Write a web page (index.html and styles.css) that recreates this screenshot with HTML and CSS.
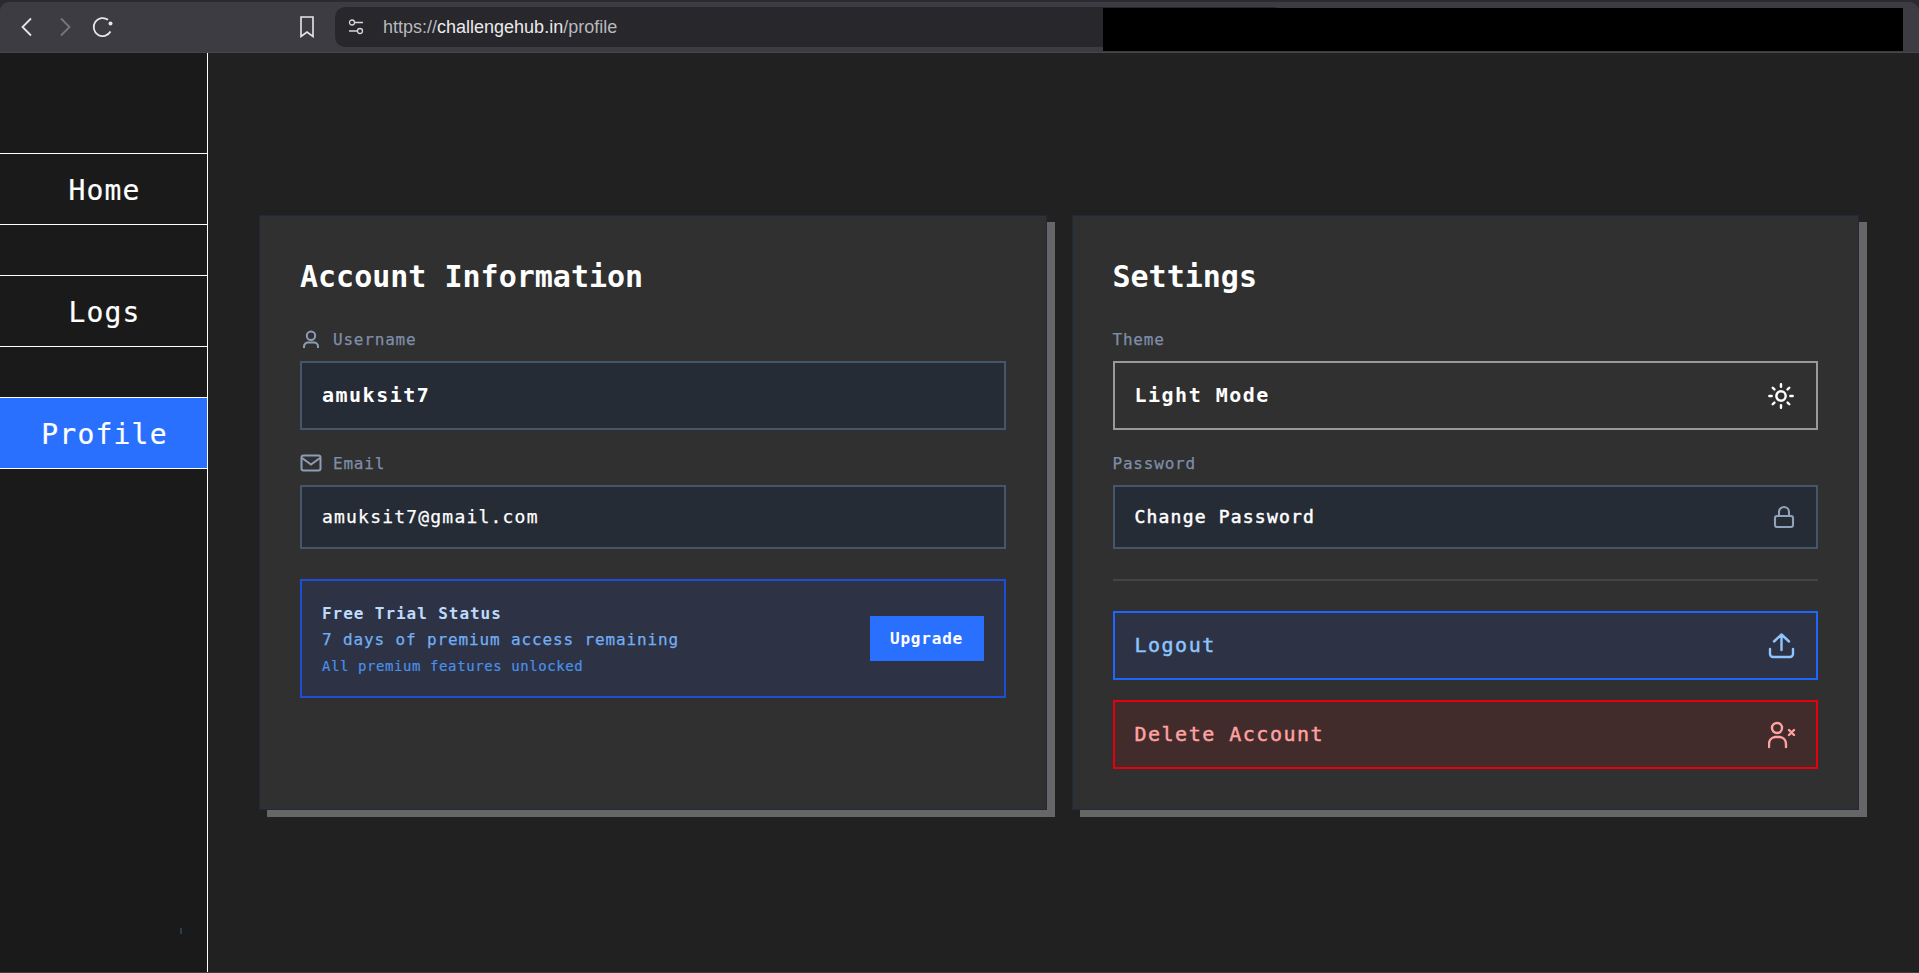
FILE: index.html
```html
<!DOCTYPE html>
<html lang="en">
<head>
<meta charset="utf-8">
<title>Profile</title>
<link rel="stylesheet" href="styles.css">
</head>
<body>
<header class="browser">
  <div class="browser-nav">
    <svg class="b-icon back" width="14" height="20" viewBox="0 0 14 20"><path d="M11 1.5 2.5 10 11 18.5"/></svg>
    <svg class="b-icon forward" width="14" height="20" viewBox="0 0 14 20"><path d="M3 1.5 11.500 10 3 18.500"/></svg>
    <svg class="b-icon reload" width="22" height="22" viewBox="0 0 22 22"><path d="M16 3.800A9 9 0 1 0 18.500 15.500"/><circle class="dot" cx="18.500" cy="7.500" r="2"/></svg>
  </div>
  <svg class="b-icon bookmark" width="16" height="22" viewBox="0 0 16 22"><path d="M2 1h12v19.500L8 16l-6 4.500z"/></svg>
  <div class="omnibox">
    <svg class="tune" width="16" height="16" viewBox="0 0 16 16"><circle cx="4" cy="3.500" r="2.500"/><path d="M6.500 3.500H15M1 12h8.500"/><circle cx="12" cy="12" r="2.500"/></svg>
    <span class="url">https://<b>challengehub.in</b>/profile</span>
  </div>
  <div class="redacted"></div>
</header>
<div class="app">
  <aside class="sidebar">
    <nav class="nav">
      <a class="nav-item">Home</a>
      <a class="nav-item">Logs</a>
      <a class="nav-item active">Profile</a>
    </nav>
    <span class="speck"></span>
  </aside>
  <main class="main">
    <section class="card">
      <h2 class="card-title">Account Information</h2>
      <div class="label">
        <svg class="label-icon" width="22" height="22" viewBox="0 0 22 22"><circle cx="11" cy="7.700" r="4.200"/><path d="M4 20v-1.500a4 4 0 0 1 4-4h6a4 4 0 0 1 4 4V20"/></svg>
        <span>Username</span>
      </div>
      <div class="field tall slate"><span class="text-lg strong">amuksit7</span></div>
      <div class="label next">
        <svg class="label-icon" width="22" height="22" viewBox="0 0 22 22"><rect x="1.500" y="3.500" width="19" height="15" rx="2"/><path d="m2 6 9 6.500L20 6"/></svg>
        <span>Email</span>
      </div>
      <div class="field short slate"><span class="text-md">amuksit7@gmail.com</span></div>
      <div class="trial">
        <div class="trial-copy">
          <div class="trial-title">Free Trial Status</div>
          <div class="trial-days">7 days of premium access remaining</div>
          <div class="trial-note">All premium features unlocked</div>
        </div>
        <button class="upgrade">Upgrade</button>
      </div>
    </section>
    <section class="card">
      <h2 class="card-title">Settings</h2>
      <div class="label"><span>Theme</span></div>
      <div class="field tall theme">
        <span class="text-lg strong">Light Mode</span>
        <svg class="f-icon white" width="28" height="28" viewBox="0 0 24 24"><circle cx="12" cy="12" r="4"/><path d="M12 2v2M12 20v2M4.930 4.930l1.410 1.410M17.660 17.660l1.410 1.410M2 12h2M20 12h2M6.340 17.660l-1.410 1.410M19.070 4.930l-1.410 1.410"/></svg>
      </div>
      <div class="label next"><span>Password</span></div>
      <div class="field short slate">
        <span class="text-md semi">Change Password</span>
        <svg class="f-icon muted" width="24" height="24" viewBox="0 0 24 24"><rect x="3" y="11" width="18" height="11" rx="2"/><path d="M7 11V7a5 5 0 0 1 10 0v4"/></svg>
      </div>
      <hr class="divider">
      <div class="field tall logout">
        <span class="text-lg medium">Logout</span>
        <svg class="f-icon" width="28" height="28" viewBox="0 0 28 28"><path d="M2 17v5a3 3 0 0 0 3 3h17a3 3 0 0 0 3-3v-5M13.500 18V3M6 9.500l7.500-7 7.500 7"/></svg>
      </div>
      <div class="field tall danger">
        <span class="text-lg medium">Delete Account</span>
        <svg class="f-icon" width="28" height="28" viewBox="0 0 28 28"><circle cx="9" cy="7" r="5"/><path d="M1 26v-3a7 7 0 0 1 6-7h5a7 7 0 0 1 6 7v3M21 9l5 5M26 9l-5 5"/></svg>
      </div>
    </section>
  </main>
</div>
</body>
</html>
```
FILE: styles.css
```css
* { box-sizing: border-box; }
html, body { margin: 0; height: 100%; }
body {
  height: 973px;
  display: flex;
  flex-direction: column;
  overflow: hidden;
  background: #2a2a30;
  font-family: "DejaVu Sans Mono", "Liberation Mono", monospace;
  color: #fff;
}
.browser {
  height: 51px;
  margin-top: 2px;
  flex: none;
  display: flex;
  align-items: center;
  background: #3c3c42;
  border-radius: 9px 9px 0 0;
  position: relative;
  border-bottom: 1px solid #45454b;
}
.browser-nav { display: flex; align-items: center; width: 295px; padding-left: 20px; }
.b-icon { fill: none; stroke: #e6e6e8; stroke-width: 1.800; }
.back { margin-right: 24px; }
.forward { stroke: #77777c; margin-right: 20px; }
.reload .dot { fill: #e6e6e8; stroke: none; }
.bookmark { margin-left: 4px; stroke-width: 1.600; }
.omnibox {
  margin-left: 20px;
  width: 949px;
  height: 40px;
  display: flex;
  align-items: center;
  padding-left: 13px;
  background: #27272c;
  border-radius: 10px;
}
.tune { fill: none; stroke: #d8d8da; stroke-width: 1.300; }
.url {
  margin-left: 19px;
  font: 18px "Liberation Sans", Arial, sans-serif;
  color: #b9b9bd;
}
.url b { font-weight: 400; color: #eaeaec; }
.redacted { position: absolute; left: 1103px; right: 16px; top: 6px; bottom: 1px; background: #000; }

.app { flex: 1; display: flex; min-height: 0; border-bottom: 1px solid #3c3c42; }
.sidebar {
  width: 208px;
  flex: none;
  background: #1a1a1a;
  border-right: 1px solid #fff;
  padding-top: 100px;
  position: relative;
}
.nav { display: flex; flex-direction: column; gap: 50px; }
.nav-item {
  height: 72px;
  padding: 2px 0 0 2px;
  display: flex;
  align-items: center;
  justify-content: center;
  border-top: 1px solid #fff;
  border-bottom: 1px solid #fff;
  font-size: 28px;
  letter-spacing: 1.200px;
  -webkit-text-stroke: .2px #fff;
}
.nav-item.active { background: #2970ff; }
.speck { position: absolute; left: 180px; top: 875px; width: 2px; height: 6px; background: #2c3c50; }

.main {
  flex: 1;
  min-width: 0;
  display: flex;
  gap: 25px;
  align-items: flex-start;
  padding: 162px 60px 0 51px;
  background: #212121;
}
.card {
  flex: 1 1 0;
  height: 595px;
  padding: 40px;
  background: #303030;
  border: 1px solid #1e293b;
  box-shadow: 8px 7px 0 #666;
}
.card-title { margin: 0 0 33px; padding-top: 3px; font-size: 30px; line-height: 36px; font-weight: 700; }
.label {
  height: 22px;
  margin-bottom: 11px;
  display: flex;
  align-items: center;
  gap: 11px;
  font-size: 16px;
  letter-spacing: .05em;
  color: #7f8ea8;
  -webkit-text-stroke: .25px #7f8ea8;
}
.label.next { margin-top: 22px; }
.label-icon { fill: none; stroke: #8e9db5; stroke-width: 2; flex: none; }
.field {
  display: flex;
  align-items: center;
  justify-content: space-between;
  padding: 0 20px;
  border: 2px solid;
}
.tall { height: 69px; }
.short { height: 64px; }
.slate { background: #262c36; border-color: #45556c; }
.theme { border-color: #999; }
.text-lg { font-size: 20px; letter-spacing: 1.500px; padding-bottom: 2px; }
.text-md { font-size: 18px; letter-spacing: 1.200px; padding-bottom: 1px; -webkit-text-stroke: .25px currentColor; }
.strong { font-weight: 700; }
.semi { -webkit-text-stroke: .5px currentColor; }
.medium { -webkit-text-stroke: .45px currentColor; }
.f-icon { fill: none; stroke: currentColor; stroke-width: 2.400; flex: none; stroke-linecap: round; stroke-linejoin: round; }
.f-icon.white { color: #fff; stroke-width: 2.100; margin-right: 1px; }
.f-icon.muted { color: #90a1b9; stroke-width: 2.100; }
.trial {
  margin-top: 30px;
  padding: 20px;
  height: 119px;
  display: flex;
  align-items: center;
  justify-content: space-between;
  background: #2d3344;
  border: 2px solid #1c4ed8;
}
.trial-title { font-size: 16px; line-height: 24px; font-weight: 700; letter-spacing: .94px; color: #bedbff; }
.trial-days { margin-top: 2px; font-size: 16px; line-height: 24px; letter-spacing: .87px; color: #72aef5; -webkit-text-stroke: .25px #72aef5; }
.trial-note { margin-top: 4px; font-size: 14px; line-height: 20px; letter-spacing: .58px; color: #4a90e8; -webkit-text-stroke: .2px #4a90e8; }
.upgrade {
  width: 114px;
  height: 45px;
  padding: 0;
  border: 0;
  background: #2970ff;
  color: #fff;
  font: 700 16px "DejaVu Sans Mono", "Liberation Mono", monospace;
  letter-spacing: .05em;
}
.divider { height: 2px; margin: 30px 0; border: 0; background: #444; }
.logout { background: #2d3344; border-color: #1f66ff; color: #8ec5ff; margin-bottom: 20px; }
.danger { background: #422b2b; border-color: #e7000b; color: #ffa2a2; }
```
